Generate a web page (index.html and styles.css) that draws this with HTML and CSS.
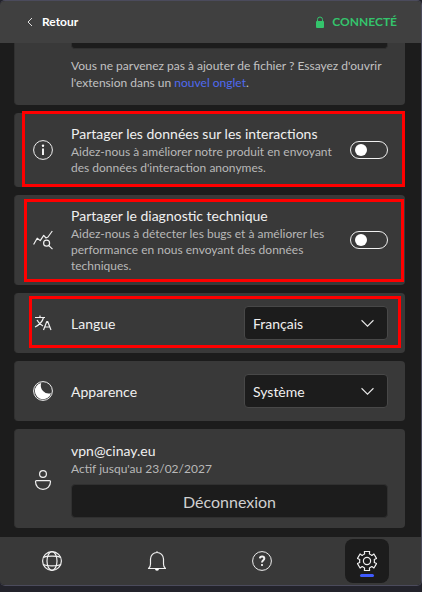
FILE: index.html
```html
<!DOCTYPE html>
<html lang="fr">
<head>
<meta charset="utf-8">
<meta name="viewport" content="width=device-width, initial-scale=1">
<title>Paramètres</title>
<link rel="stylesheet" href="styles.css">
</head>
<body>
<div class="window">
  <header class="topbar">
    <a class="back" href="#">
      <svg class="back-icon" viewBox="0 0 6 10" aria-hidden="true"><path d="M5 1 1 5l4 4"/></svg>
      Retour
    </a>
    <div class="status">
      <svg class="lock" viewBox="0 0 8 12" aria-hidden="true"><rect y="5" width="8" height="7" rx="1"/><path d="M1.500 5V3.500a2.500 2.500 0 0 1 5 0V5"/></svg>
      CONNECTÉ
    </div>
  </header>

  <main class="settings">
    <section class="card card-cut">
      <div class="dropzone"></div>
      <p class="help">Vous ne parvenez pas à ajouter de fichier ? Essayez d'ouvrir l'extension dans un <a href="#">nouvel onglet</a>.</p>
    </section>

    <section class="card">
      <svg class="icon" viewBox="0 0 20 20" aria-hidden="true"><circle cx="10" cy="10" r="9.400"/><path class="thick" d="M10 8.500V15"/><circle class="solid" cx="10" cy="5.800" r="1.200"/></svg>
      <label class="text" for="interactions">
        <span class="title">Partager les données sur les interactions</span>
        <span class="desc">Aidez-nous à améliorer notre produit en envoyant des données d'interaction anonymes.</span>
      </label>
      <input class="toggle" type="checkbox" id="interactions">
      <span class="mark mark-interactions"></span>
    </section>

    <section class="card">
      <svg class="icon" viewBox="0 0 20 20" aria-hidden="true"><path class="firm" d="M.6 14.500 4.200 8.200l3 2.400 3.500-5.200L13 8l2-1 4.300-6M15.800 15.600l3.700 3.500"/><circle class="firm" cx="13.600" cy="13.200" r="3"/></svg>
      <label class="text" for="diagnostic">
        <span class="title">Partager le diagnostic technique</span>
        <span class="desc">Aidez-nous à détecter les bugs et à améliorer les performance en nous envoyant des données techniques.</span>
      </label>
      <input class="toggle" type="checkbox" id="diagnostic">
      <span class="mark mark-diagnostic"></span>
    </section>

    <section class="card field">
      <svg class="icon" viewBox="0 0 20 20" aria-hidden="true"><path class="firm" d="M2 4.500h10M7 2.500v2M10.500 4.500C9.500 8.500 6 12 2 14M4 7c1.500 3 4 5 6 6M10.500 17l3.300-8.500h.9L18 17M11.600 14h5.300"/></svg>
      <label class="text title" for="langue">Langue</label>
      <span class="picker">
        <select id="langue"><option>Français</option><option>English</option></select>
        <svg class="chevron" viewBox="0 0 12 8" aria-hidden="true"><path d="m.5 1 5.500 5.500L11.500 1"/></svg>
      </span>
      <span class="mark mark-langue"></span>
    </section>

    <section class="card field">
      <svg class="icon" viewBox="0 0 20 20" aria-hidden="true"><circle cx="10" cy="10" r="9.400"/><path class="solid" d="M8.200 2A8.200 8.200 0 1 0 18 12.200 8 8 0 0 1 8.200 2Z"/></svg>
      <label class="text title" for="apparence">Apparence</label>
      <span class="picker">
        <select id="apparence"><option>Système</option><option>Clair</option><option>Sombre</option></select>
        <svg class="chevron" viewBox="0 0 12 8" aria-hidden="true"><path d="m.5 1 5.500 5.500L11.500 1"/></svg>
      </span>
    </section>

    <section class="card account">
      <svg class="icon" viewBox="0 0 20 20" aria-hidden="true"><circle class="firm" cx="10" cy="4" r="3.400"/><path class="firm" d="M3.500 10.600h13a1 1 0 0 1 1 1C17.500 16 14.500 19.400 10 19.400S2.500 16 2.500 11.600a1 1 0 0 1 1-1Z"/></svg>
      <div class="text">
        <span class="title">vpn@cinay.eu</span>
        <span class="desc">Actif jusqu'au 23/02/2027</span>
        <button class="logout" type="button">Déconnexion</button>
      </div>
    </section>
  </main>

  <nav class="tabs">
    <button class="tab" type="button" aria-label="Connexion">
      <svg class="icon" viewBox="0 0 20 20" aria-hidden="true"><circle class="firm" cx="10" cy="10" r="9.400"/><ellipse class="firm" cx="10" cy="10" rx="5" ry="9.400"/><path class="firm" d="M1.400 6.500Q3.500 5.200 10 5.200T18.600 6.500M1.400 13.500Q3.500 14.800 10 14.800T18.600 13.500"/></svg>
    </button>
    <button class="tab" type="button" aria-label="Notifications">
      <svg class="icon" viewBox="0 0 20 20" aria-hidden="true"><path class="firm" d="M1.500 17.500c1.700-1 2-2.500 2-4.500V8a6.500 6.500 0 0 1 13 0v5c0 2 .3 3.500 2 4.500ZM10 .2v1.300"/><path class="solid" d="M8 17.800h4a2 2 0 0 1-4 0Z"/></svg>
    </button>
    <button class="tab" type="button" aria-label="Aide">
      <svg class="icon" viewBox="0 0 20 20" aria-hidden="true"><circle cx="10" cy="10" r="9.400"/><path class="thick" d="M7.900 7.300c.2-2.400 4.400-2.400 4.400.2 0 1.700-2.300 1.700-2.300 4"/><circle class="solid" cx="10" cy="14" r="1.100"/></svg>
    </button>
    <button class="tab active" type="button" aria-label="Paramètres">
      <svg class="icon" viewBox="-10 -10 20 20" aria-hidden="true"><path class="firm" d="M-2.600-9.500H2.600L2.400-7Q3.600-6.500 4.860-5.580L6.930-7 9.530-2.500 7.260-1.420Q7.500 0 7.260 1.420L9.530 2.500 6.930 7 4.860 5.580Q3.600 6.500 2.400 7L2.600 9.500H-2.600L-2.400 7Q-3.600 6.500-4.860 5.580L-6.930 7-9.530 2.500-7.260 1.420Q-7.500 0-7.260-1.420L-9.530-2.500-6.930-7-4.860-5.580Q-3.600-6.500-2.400-7Z"/><circle class="firm" r="3.600"/></svg>
    </button>
  </nav>
</div>
</body>
</html>
```
FILE: styles.css
```css
* {
  box-sizing: border-box;
}

body {
  margin: 0;
  min-height: 100vh;
  padding-bottom: 6px;
  background: #23232b;
  color: #f0f0f0;
  font-family: Lato, sans-serif;
  font-size: 12px;
  line-height: 16px;
}

button,
select {
  font: inherit;
  color: inherit;
}

.window {
  display: flex;
  flex-direction: column;
  min-height: calc(100vh - 6px);
  border: solid #4b4b5c;
  border-width: 1px 1px 1px 0;
  border-radius: 5px;
  background: #1c1c1c;
  overflow: hidden;
}

.topbar {
  display: flex;
  align-items: center;
  justify-content: space-between;
  height: 42px;
  padding: 0 24px 0 27px;
  background: #404040;
  font-weight: 700;
}

.back,
.status {
  display: flex;
  align-items: center;
}

.back {
  gap: 9px;
  color: #fff;
  text-decoration: none;
}

.back-icon {
  width: 6px;
  height: 10px;
  fill: none;
  stroke: #e0e0e0;
}

.status {
  gap: 8px;
  color: #34c46c;
}

.lock {
  width: 8px;
  height: 12px;
  fill: #34c46c;
}

.lock path {
  fill: none;
  stroke: #34c46c;
}

.settings {
  flex: 1;
  display: flex;
  flex-direction: column;
  gap: 8px;
  padding: 0 16px 8px 14px;
}

.card {
  position: relative;
  display: flex;
  align-items: center;
  gap: 18px;
  padding: 11px 17px 11px 18px;
  border: solid #303030;
  border-width: 0 0 0 1px;
  border-radius: 4px;
  background: #393939;
}

.card-cut {
  display: block;
  padding: 0 17px 14px 56px;
  border-radius: 0 0 4px 4px;
}

.account {
  padding-top: 12px;
  padding-bottom: 10px;
}

.dropzone {
  height: 6px;
  border: solid #303030;
  border-width: 0 1px 1px;
  border-radius: 0 0 4px 4px;
  background: #1c1c1c;
}

.help {
  margin: 8px 0 0;
  color: #c2c2c2;
  line-height: 17px;
}

.help a {
  color: #4f69f0;
  text-decoration: none;
}

.icon {
  flex: none;
  width: 20px;
  height: 20px;
  fill: none;
  stroke: #f0f0f0;
  stroke-linejoin: round;
}

.icon .thick {
  stroke-width: 2;
}

.icon .firm {
  stroke-width: 1.2;
}

.icon .solid {
  fill: #fff;
  stroke: none;
}

.text {
  flex: 1;
  display: flex;
  flex-direction: column;
  min-width: 0;
}

.title {
  font-size: 14px;
  line-height: 20px;
}

.field .title {
  padding-top: 2px;
}

.desc {
  color: #b8b8b8;
}

.toggle {
  appearance: none;
  flex: none;
  display: flex;
  align-items: center;
  width: 38px;
  height: 18px;
  margin: 0;
  padding: 0 4px;
  border: 1px solid #f0f0f0;
  border-radius: 9px;
}

.toggle::before {
  content: "";
  width: 12px;
  height: 12px;
  border-radius: 50%;
  background: #fff;
}

.toggle:checked {
  justify-content: flex-end;
}

.picker {
  position: relative;
  width: 144px;
  margin: 2px 0;
}

.picker select {
  appearance: none;
  display: block;
  width: 100%;
  height: 34px;
  padding: 2px 32px 0 8px;
  border: 1px solid #484848;
  border-radius: 4px;
  background: #1c1c1c;
  font-size: 14px;
}

.chevron {
  position: absolute;
  top: 13px;
  right: 14px;
  width: 13px;
  height: 9px;
  fill: none;
  stroke: #e8e8e8;
  pointer-events: none;
}

.logout {
  height: 34px;
  margin-top: 7px;
  padding-top: 2px;
  border: 1px solid #303030;
  border-radius: 4px;
  background: #1c1c1c;
  color: #d0d0d0;
  font-size: 16px;
}

/* Highlight frames drawn over a setting */
.mark {
  position: absolute;
  border: 3px solid #f00;
  pointer-events: none;
}

.mark-interactions {
  inset: -2px 0 0 7px;
}

.mark-diagnostic {
  inset: 4px 1px 3px 9px;
}

.mark-langue {
  inset: 3px 4px 5px 14px;
}

.tabs {
  display: grid;
  grid-template-columns: repeat(4, 1fr);
  justify-items: center;
  padding: 2px 2px 2px 0;
  background: #393939;
}

.tab {
  position: relative;
  display: grid;
  place-items: center;
  width: 44px;
  height: 44px;
  padding: 0;
  border: 0;
  border-radius: 8px;
  background: none;
}

.tab.active {
  background: #1c1c1c;
}

.tab.active::after {
  content: "";
  position: absolute;
  bottom: 6px;
  width: 14px;
  height: 3px;
  border-radius: 2px;
  background: #3f5bff;
}
```
